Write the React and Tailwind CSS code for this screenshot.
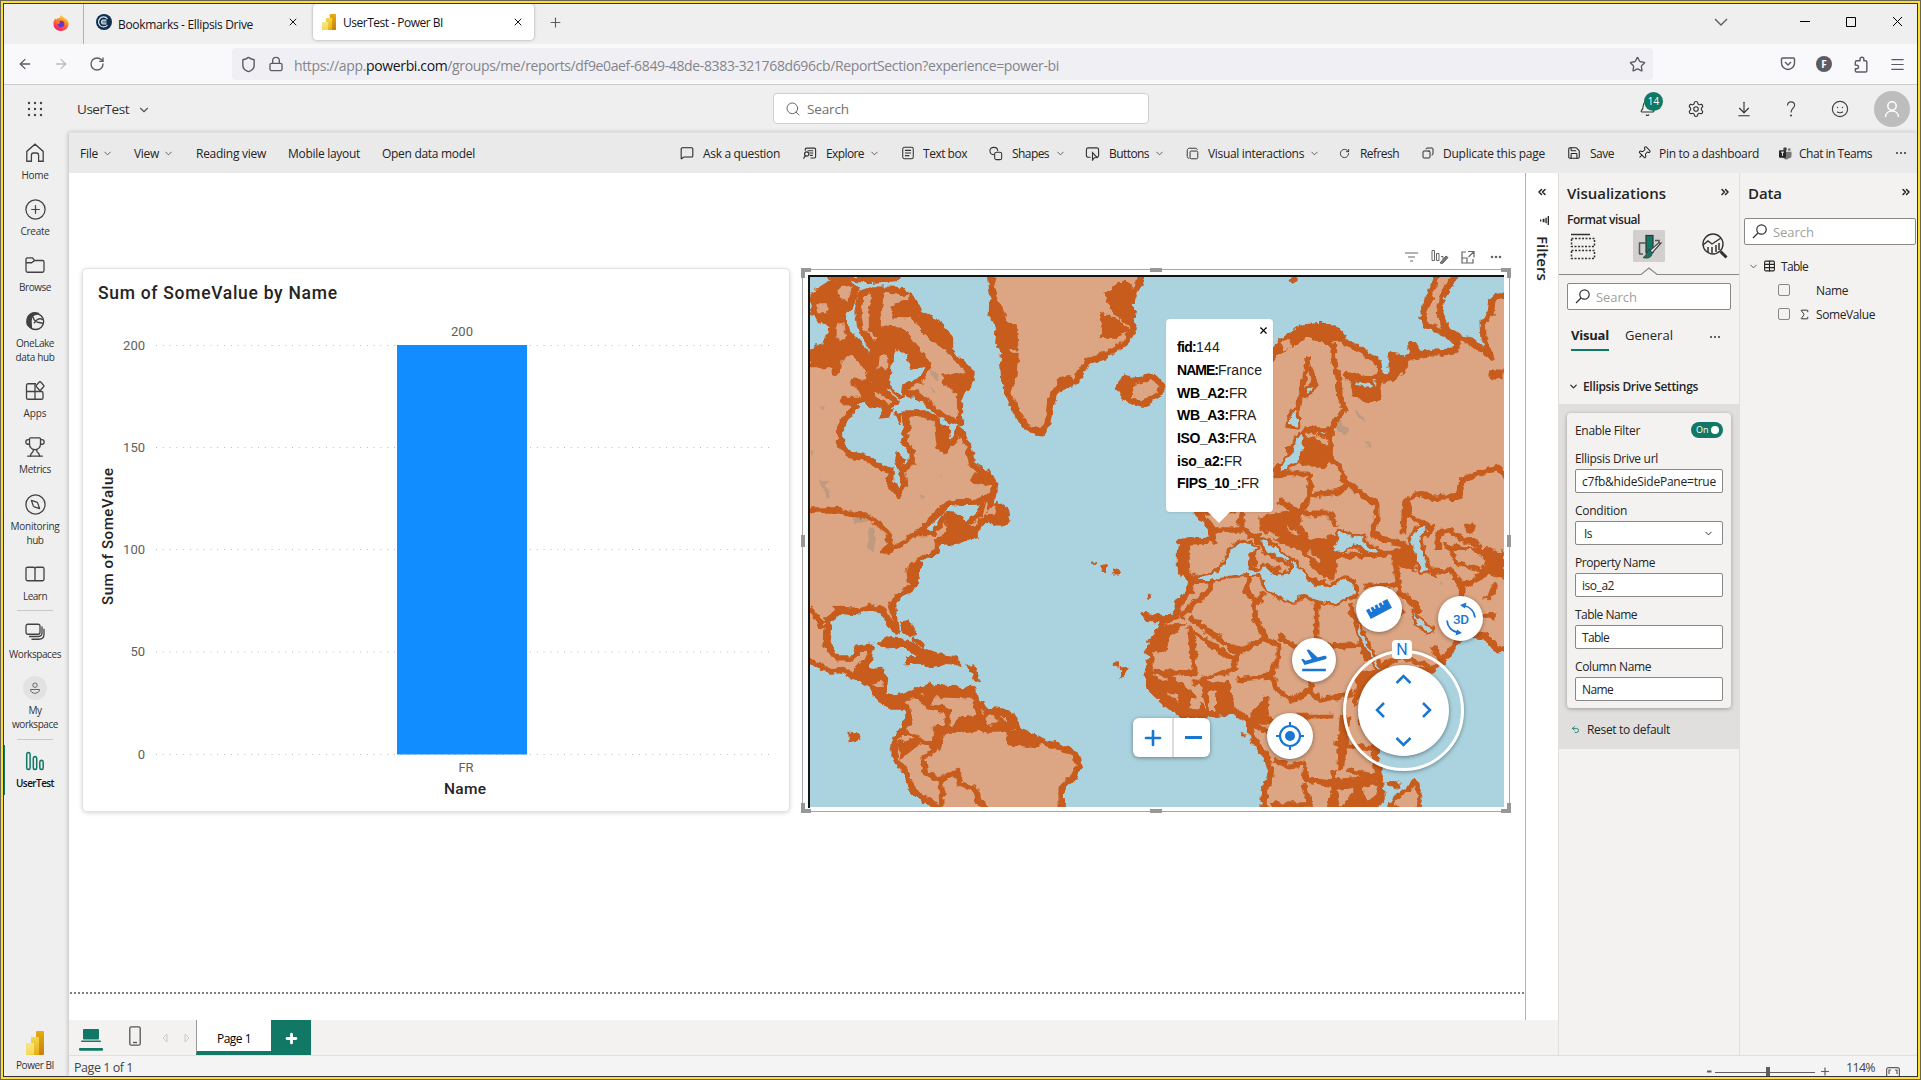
import React, { useLayoutEffect, useRef } from 'react';
import {
  ArrowLeft, ArrowRight, RotateCw, Shield, Lock, Star, Menu, X, Plus, ChevronDown, Bell, Settings,
  ArrowDownToLine, Search, MessageSquare, Trophy, CirclePlus, Compass, Save, Pin, Copy,
  ChevronsLeft, ChevronsRight, Undo2, Sigma, Table as TableIcon,
} from 'lucide-react';

/* Single-line label whose tracking is adjusted so that it fills the given width. */
function T({ w, className = '', children }) {
  const ref = useRef(null);
  useLayoutEffect(() => {
    const el = ref.current;
    el.style.letterSpacing = '0px';
    const natural = el.getBoundingClientRect().width;
    el.style.letterSpacing = `${(w - natural) / el.textContent.length}px`;
  }, [w]);
  return <span ref={ref} className={`inline-block shrink-0 translate-y-px whitespace-pre ${className}`}>{children}</span>;
}

const Chev = ({ className = 'h-[11px] w-[11px]' }) => (
  <ChevronDown className={`shrink-0 text-[#555] ${className}`} strokeWidth={2} />
);

function PowerBiLogo({ className }) {
  return (
    <svg viewBox="0 0 18 24" className={className} preserveAspectRatio="none">
      <defs>
        <linearGradient id="pb1" x1="0" y1="0" x2="0" y2="1"><stop stopColor="#e6ad10" /><stop offset="1" stopColor="#c87e0e" /></linearGradient>
        <linearGradient id="pb2" x1="0" y1="0" x2="0" y2="1"><stop stopColor="#f6d751" /><stop offset="1" stopColor="#e6ad10" /></linearGradient>
        <linearGradient id="pb3" x1="0" y1="0" x2="0" y2="1"><stop stopColor="#f9e589" /><stop offset="1" stopColor="#f6d751" /></linearGradient>
      </defs>
      <rect x="10" y="0" width="8" height="24" rx=".8" fill="url(#pb1)" />
      <rect x="5" y="6" width="8" height="18" rx=".8" fill="url(#pb2)" />
      <rect x="0" y="12" width="8" height="12" rx=".8" fill="url(#pb3)" />
    </svg>
  );
}

function TabStrip() {
  return (
    <div className="flex h-10 shrink-0 items-center bg-[#efefef] text-[12px] text-[#15141a]">
      <svg viewBox="0 0 16 16" className="ml-[49px] h-4 w-4 shrink-0 -translate-y-px">
        <defs>
          <linearGradient id="ff" x1=".8" y1="0" x2=".3" y2="1"><stop stopColor="#fff04a" /><stop offset=".4" stopColor="#ff8a1e" /><stop offset="1" stopColor="#f5156c" /></linearGradient>
        </defs>
        <path d="M8.400 0c1 1.500 1.600 2 3 3 2.500 1.200 4.200 3 4.200 6A7.600 7 0 0 1 .4 9c0-2.500.8-4 2-5.500l.9 1.200C4 3.500 5 3.200 6 3.400 7 2 7.500 1 8.400 0z" fill="url(#ff)" />
        <circle cx="8" cy="9" r="3.300" fill="#6b35c9" />
        <path d="M3 6c2-1 3.500 0 4.500 1.200-1.500 0-1.500 1-1 1.800C4.500 9.500 3.500 8 3 6z" fill="#ff7b22" />
      </svg>
      <div className="ml-[14px] h-10 w-px bg-[#b3b3b3]" />
      <svg viewBox="0 0 16 16" className="ml-3 h-4 w-4 shrink-0 -translate-y-[2px]">
        <circle cx="8" cy="8" r="8" fill="#0f3050" />
        <path d="M11.500 4.800A5 5 0 1 0 11.500 11M5.500 8h5M10.500 6.200H6.800c-1.600 0-1.600 3.600 0 3.600h3.700" fill="none" stroke="#dfe8f0" strokeWidth="1.200" />
      </svg>
      <T w={135} className="ml-[6px] -translate-y-[1px]">Bookmarks - Ellipsis Drive</T>
      <X className="ml-[34px] h-3 w-3 -translate-y-[2px]" strokeWidth={2} />
      <div className="ml-[14px] flex h-9 w-[221px] -translate-y-[2px] items-center rounded bg-white shadow-[0_0_3px_rgba(0,0,0,.35)]">
        <PowerBiLogo className="ml-[9px] h-4 w-[14px]" />
        <T w={100} className="ml-[7px]">UserTest - Power BI</T>
        <X className="ml-[69px] h-3 w-3" strokeWidth={2} />
      </div>
      <Plus className="ml-[14px] h-[15px] w-[15px] -translate-y-[2px] text-[#5b5b66]" strokeWidth={1.800} />
      <svg viewBox="0 0 200 20" className="ml-auto mr-[15px] h-5 w-[200px] -translate-y-[2px]" fill="none" stroke="#000" strokeWidth="1">
        <path d="M13 7l6 6 6-6" stroke="#5b5b66" strokeWidth="1.400" />
        <path d="M98 9.500h10M144.500 5.500h9v9h-9zM191 5l9 9M200 5l-9 9" />
      </svg>
    </div>
  );
}

function UrlBar() {
  return (
    <div className="flex h-[41px] shrink-0 items-center border-b border-[#cccccf] bg-[#f9f9fb] text-[#5b5b66]">
      <ArrowLeft className="ml-[13px] h-4 w-4" strokeWidth={1.900} />
      <ArrowRight className="ml-5 h-4 w-4 text-[#bcbcc2]" strokeWidth={1.900} />
      <RotateCw className="ml-5 h-4 w-4" strokeWidth={2} />
      <div className="ml-[127px] flex h-8 w-[1421px] items-center rounded bg-[#f0f0f4]">
        <Shield className="ml-2 h-[17px] w-[17px]" strokeWidth={2} />
        <Lock className="ml-[11px] h-4 w-4" strokeWidth={2} />
        <T w={765} className="ml-[10px] text-[14px] text-[#84848c]">
          https://app.<span className="text-[#15141a]">powerbi.com</span>/groups/me/reports/df9e0aef-6849-48de-8383-321768d696cb/ReportSection?experience=power-bi
        </T>
        <Star className="ml-auto mr-[7px] h-[17px] w-[17px]" strokeWidth={1.900} />
      </div>
      <svg viewBox="0 0 16 16" className="ml-[127px] h-4 w-4" fill="none" stroke="#5b5b66" strokeWidth="1.400">
        <path d="M2.500 2h11c.6 0 1 .4 1 1v4a6.500 6.500 0 0 1-13 0V3c0-.6.4-1 1-1z" /><path d="M5 6l3 3 3-3" />
      </svg>
      <div className="ml-[20px] flex h-4 w-4 items-center justify-center rounded-full bg-[#5b5b66] text-[10px] font-bold text-white">F</div>
      <svg viewBox="0 0 16 18" className="ml-[21px] h-[17px] w-4" fill="none" stroke="#5b5b66" strokeWidth="1.500" strokeLinejoin="round">
        <path d="M2 8V6.500C2 5.700 2.500 5 3.500 5H7V3.200C7 .6 11 .6 11 3.200V5h1.800c.8 0 1.400.6 1.400 1.400V15.600c0 .8-.6 1.400-1.400 1.400H3.400C2.600 17 2 16.400 2 15.600V13.500h1.500c2.500 0 2.500-3.800 0-3.800H2z" />
      </svg>
      <Menu className="ml-[20px] h-[17px] w-[17px]" strokeWidth={1.700} />
    </div>
  );
}

function Header() {
  return (
    <div className="flex h-[47px] shrink-0 items-center bg-[#efefef] text-[#333]">
      <svg viewBox="0 0 16 16" className="ml-[23px] h-4 w-4" fill="#444">
        {[2, 8, 14].map((y) => [2, 8, 14].map((x) => <circle key={`${x}-${y}`} cx={x} cy={y} r="1.200" />))}
      </svg>
      <T w={52} className="ml-[34px] text-[13.500px]">UserTest</T>
      <Chev className="ml-[8px] h-[14px] w-[14px] translate-y-px" />
      <div className="ml-[622px] flex h-[31px] w-[376px] items-center rounded border border-[#cfcfcf] bg-white">
        <Search className="ml-[11px] h-[16px] w-[16px] text-[#666]" strokeWidth={1.500} />
        <T w={42} className="ml-[6px] text-[13.500px] text-[#707070]">Search</T>
      </div>
      <div className="relative ml-[490px]">
        <Bell className="h-[17px] w-[17px]" strokeWidth={1.500} />
        <span className="absolute -top-[8px] left-[5px] flex h-[19px] w-[19px] items-center justify-center rounded-full bg-[#117865] text-[10px] text-white">14</span>
      </div>
      <Settings className="ml-[31px] h-[18px] w-[18px]" strokeWidth={1.500} />
      <ArrowDownToLine className="ml-[30px] h-[18px] w-[18px]" strokeWidth={1.500} />
      <svg viewBox="0 0 12 18" className="ml-[32px] h-[18px] w-3" fill="none" stroke="#444" strokeWidth="1.200">
        <path d="M2.500 5.500C2.500 3 4 1.800 6 1.800S9.600 3.200 9.600 5.200C9.600 8 6 8.500 6 12.500" /><circle cx="6" cy="15.500" r=".5" fill="#444" />
      </svg>
      <svg viewBox="0 0 18 18" className="ml-[34px] h-[18px] w-[18px]" fill="none" stroke="#444" strokeWidth="1.200">
        <circle cx="9" cy="9" r="7.600" /><path d="M6 11.800c1.500 1 4.500 1 6 0" /><circle cx="6.500" cy="7.500" r=".7" fill="#444" stroke="none" /><circle cx="11.500" cy="7.500" r=".7" fill="#444" stroke="none" />
      </svg>
      <div className="ml-[25px] flex h-9 w-9 items-center justify-center rounded-full bg-[#bdbdbd]">
        <svg viewBox="0 0 18 20" className="h-5 w-[18px]" fill="none" stroke="#fff" strokeWidth="1.500"><circle cx="9" cy="7" r="4.200" /><path d="M2.500 18c0-8 13-8 13 0" /></svg>
      </div>
    </div>
  );
}

const ic = 'h-[14px] w-[14px] shrink-0';
function Glyph({ name, className = ic }) {
  const paths = {
    explore: <><path d="M3.500 5V3.500c0-.8.5-1.300 1.300-1.300h8.400c.8 0 1.300.5 1.300 1.300v8c0 .8-.5 1.300-1.300 1.300H9M6 5h6M8 7.500h4M8.500 10h3" /><circle cx="5" cy="8.500" r="2.300" /><path d="M1.500 13.500l2-3" /></>,
    textbox: <><rect x="2" y="1.500" width="12" height="13" rx="2" /><path d="M4.500 5h7M4.500 8h7M4.500 11h5" /></>,
    shapes: <><path d="M6 9.500C-.5 9-.5 1 5.500 1c3 0 4.500 2 4.500 4" /><rect x="6.500" y="6.500" width="8" height="8.500" rx="2" /></>,
    buttons: <><path d="M6 12H3.500C2.500 12 1.500 11.500 1.500 10V4c0-1.200.8-2 2-2h9c1.200 0 2 .8 2 2v6c0 1-.5 1.700-1.500 2" /><path d="M8 7v8l2-2.500 3-.2z" /></>,
    visual: <><path d="M4 14c-1.500 0-2.500-1-2.500-2.500v-7C1.500 2.500 3 1.500 4.500 1.500H11c1.500 0 2.500.7 3 2" /><rect x="5" y="5" width="9.500" height="9.500" rx="1.500" /></>,
  };
  return <svg viewBox="0 0 16 16" className={className} fill="none" stroke="#333" strokeWidth="1.200">{paths[name]}</svg>;
}

function CommandBar() {
  return (
    <div className="flex h-[41px] shrink-0 items-center border-t border-[#e0e0e0] bg-[#eaeaea] text-[12px] text-[#252423]">
      <T w={18} className="ml-[11px]">File</T><Chev className="ml-1 h-[11px] w-[11px]" />
      <T w={25} className="ml-[21px]">View</T><Chev className="ml-1 h-[11px] w-[11px]" />
      <T w={70} className="ml-[22px]">Reading view</T>
      <T w={72} className="ml-[22px]">Mobile layout</T>
      <T w={93} className="ml-[22px]">Open data model</T>
      <MessageSquare className={`${ic} ml-[205px]`} strokeWidth={1.800} />
      <T w={77} className="ml-[9px]">Ask a question</T>
      <Glyph name="explore" className="ml-[22px] h-[15px] w-[15px]" />
      <T w={38} className="ml-[9px]">Explore</T><Chev className="ml-[5px] h-[11px] w-[11px]" />
      <Glyph name="textbox" className="ml-[21px] h-[14px] w-[14px]" />
      <T w={44} className="ml-[8px]">Text box</T>
      <Glyph name="shapes" className="ml-[22px] h-[15px] w-[14px]" />
      <T w={37} className="ml-[9px]">Shapes</T><Chev className="ml-[6px] h-[11px] w-[11px]" />
      <Glyph name="buttons" className="ml-[19px] h-[15px] w-[15px]" />
      <T w={40} className="ml-[9px]">Buttons</T><Chev className="ml-[5px] h-[11px] w-[11px]" />
      <Glyph name="visual" className="ml-[21px] h-[13px] w-[13px]" />
      <T w={96} className="ml-[9px]">Visual interactions</T><Chev className="ml-[5px] h-[11px] w-[11px]" />
      <RotateCw className="ml-[19px] h-[11px] w-[11px]" strokeWidth={1.800} />
      <T w={39} className="ml-[10px]">Refresh</T>
      <Copy className="ml-[23px] h-3 w-3 -scale-x-100" strokeWidth={1.900} />
      <T w={102} className="ml-[9px]">Duplicate this page</T>
      <Save className="ml-[22px] h-[14px] w-[14px]" strokeWidth={1.800} />
      <T w={24} className="ml-[9px]">Save</T>
      <Pin className="ml-[23px] h-[14px] w-[14px] rotate-45" strokeWidth={1.700} />
      <T w={100} className="ml-[8px]">Pin to a dashboard</T>
      <svg viewBox="0 0 14 14" className="ml-5 h-[13px] w-[13px]">
        <circle cx="6.500" cy="2.200" r="2" fill="#444" /><circle cx="11" cy="2.800" r="1.500" fill="#777" />
        <path d="M5 5h8.500v4.500a2.500 2.500 0 0 1-3 2.500C9 14 5 14 4.500 11z" fill="#777" /><rect x="0" y="3.500" width="7.500" height="8" rx="1" fill="#252423" /><path d="M2 5.500h3.500M3.800 5.500v4" stroke="#fff" />
      </svg>
      <T w={73} className="ml-[7px]">Chat in Teams</T>
      <svg viewBox="0 0 12 4" className="ml-[23px] h-1 w-3" fill="#333"><circle cx="2" cy="2" r="1" /><circle cx="6" cy="2" r="1" /><circle cx="10" cy="2" r="1" /></svg>
    </div>
  );
}

function NavItem({ icon, lines, className = '', bold, widths }) {
  return (
    <div className={`relative flex w-full shrink-0 flex-col items-center pr-[3px] pt-[3px] ${className}`}>
      {bold && <div className="absolute -top-[3px] left-0 h-[50px] w-px bg-[#117865]" />}
      <div className="flex h-[20px] items-center">{icon}</div>
      <div className="mt-[4px] flex flex-col items-center">
        {lines.map((l, i) => <T key={l} w={widths[i]} className={`text-[10px] leading-[14px] ${bold ? 'font-semibold text-[#111]' : 'text-[#333]'}`}>{l}</T>)}
      </div>
    </div>
  );
}

const nav = 'h-[20px] w-[20px] text-[#424242]';
const Svg = ({ children }) => <svg viewBox="0 0 20 18" preserveAspectRatio="none" className={nav} fill="none" stroke="#424242" strokeWidth="1.300">{children}</svg>;

function Sidebar() {
  return (
    <div className="flex w-[65px] shrink-0 flex-col items-center bg-[#efefef] pt-[8px]">
      <NavItem className="h-[56px]" lines={['Home']} widths={[27]} icon={<Svg><path d="M1.800 15.500V7.600L10 1l8.200 6.600v8.900h-4.600V11c0-1.200-.8-2-2-2H8.400c-1.200 0-2 .8-2 2v5.500H1.800z" /></Svg>} />
      <NavItem className="h-[56px]" lines={['Create']} widths={[29]} icon={<CirclePlus className="h-[23px] w-[23px] text-[#424242]" strokeWidth={1.300} />} />
      <NavItem className="h-[56px]" lines={['Browse']} widths={[32]} icon={<Svg><path d="M1 4V14c0 .8.6 1.500 1.500 1.500h15c.8 0 1.500-.6 1.500-1.500V6.300c0-.8-.6-1.300-1.500-1.300H9.500L7.500 2.600H2.500C1.600 2.600 1 3.200 1 4zM1 7h5.500L9.500 5" /></Svg>} />
      <NavItem className="h-[70px]" lines={['OneLake', 'data hub']} widths={[38, 39]} icon={<Svg><ellipse cx="10.500" cy="9.500" rx="8.200" ry="7.200" /><path d="M2 11C1 3 8 0 14 2.500 9 3 6.500 4 6 9L6.500 15C4 14 2 13 2 11z" fill="#424242" /><path d="M8 5c1 5 4 5 10 6M9 11c3-4 6-5 9-3" /></Svg>} />
      <NavItem className="h-[56px]" lines={['Apps']} widths={[23]} icon={<Svg><path d="M11 2.500H3C2.200 2.500 1.500 3 1.500 4v11c0 .9.700 1.500 1.500 1.500h13.500c.8 0 1.500-.6 1.500-1.500v-4c0-.9-.7-1.500-1.500-1.500h-15M10 2.500v14" /><rect x="12" y="1.500" width="6" height="6" rx="1" transform="rotate(45 15 4.500)" /></Svg>} />
      <NavItem className="h-[57px]" lines={['Metrics']} widths={[32]} icon={<Trophy className="h-[22px] w-[22px] text-[#424242]" strokeWidth={1.400} />} />
      <NavItem className="h-[70px]" lines={['Monitoring', 'hub']} widths={[49, 17]} icon={<Compass className="h-[23px] w-[23px] -scale-x-100 text-[#424242]" strokeWidth={1.300} />} />
      <NavItem className="h-[49px]" lines={['Learn']} widths={[24]} icon={<Svg><path d="M10 4c0-.8-.6-1-1.500-1h-6C1.600 3 1 3.400 1 4.200v9.600c0 .8.6 1.200 1.500 1.200h15c.9 0 1.500-.4 1.500-1.200V4.200C19 3.400 18.400 3 17.500 3h-6c-.9 0-1.500.2-1.500 1v11" /></Svg>} />
      <div className="mr-[3px] h-px w-9 shrink-0 bg-[#c8c8c8]" />
      <NavItem className="mt-[8px] h-[56px]" lines={['Workspaces']} widths={[52]} icon={<Svg><rect x="1" y="2" width="14" height="9" rx="1.800" /><path d="M4 13h9.500c2 0 3.500-1 3.500-3V4M6.500 15.500h7.500c3 0 5-1.500 5-4.500V6" /></Svg>} />
      <NavItem className="h-[64px]" lines={['My', 'workspace']} widths={[13, 46]} icon={<div className="flex h-6 w-6 shrink-0 items-center justify-center rounded-full bg-[#e2e2e2]"><svg viewBox="0 0 12 12" className="h-3 w-3" fill="none" stroke="#666"><circle cx="6" cy="3.200" r="2.200" /><path d="M1.500 7.500h9c0 5-9 5-9 0z" /></svg></div>} />
      <div className="mr-[3px] h-px w-9 shrink-0 bg-[#c8c8c8]" />
      <NavItem bold className="mt-[8px] h-[56px]" lines={['UserTest']} widths={[38]} icon={<svg viewBox="0 0 20 18" preserveAspectRatio="none" className={nav} fill="none" stroke="#117865" strokeWidth="1.500"><rect x="1.700" y="1.500" width="3.400" height="15" rx="1.500" /><rect x="8.300" y="5" width="3.400" height="11.500" rx="1.500" /><rect x="14.800" y="8.500" width="3.400" height="8" rx="1.500" /></svg>} />
      <div className="mt-auto flex flex-col items-center pb-[6px] pr-[3px]">
        <PowerBiLogo className="h-6 w-[18px]" />
        <T w={38} className="mt-[3px] text-[10px] leading-[12px] text-[#333]">Power BI</T>
      </div>
    </div>
  );
}

function BarChart() {
  const ticks = [[200, 76], [150, 178], [100, 280], [50, 382.500], [0, 485]];
  return (
    <div className="absolute left-[13px] top-[95px] h-[544px] w-[708px] rounded-[5px] border border-[#e3e3e3] bg-white shadow-[0_1px_4px_rgba(0,0,0,.16)]">
      <svg viewBox="-1 -1 706 542" className="h-[542px] w-[706px] font-['Roboto',sans-serif]">
        <text x="14" y="29" fontSize="17.500" fontWeight="500" fill="#252423" textLength="239" lengthAdjust="spacing">Sum of SomeValue by Name</text>
        {ticks.map(([v, y]) => (
          <g key={v}>
            <line x1="72" x2="690" y1={y - 0.500} y2={y - 0.500} stroke="#bdbdbd" strokeDasharray="1 5.800" />
            <text x="61" y={y + 3.500} textAnchor="end" fontSize="13" fill="#605e5c">{v}</text>
          </g>
        ))}
        <rect x="313" y="75" width="130" height="409.500" fill="#118dff" />
        <text x="378" y="65.500" textAnchor="middle" fontSize="13" fill="#605e5c">200</text>
        <text x="382" y="502" textAnchor="middle" fontSize="13" fill="#605e5c">FR</text>
        <text x="381" y="524" textAnchor="middle" fontSize="15.500" fontWeight="500" fill="#252423" textLength="42">Name</text>
        <text transform="translate(29 335) rotate(-90)" fontSize="15" fontWeight="500" fill="#252423" textLength="137">Sum of SomeValue</text>
      </svg>
    </div>
  );
}

const AMERICAS = 'M10,345 L95,345 115,322 150,300 190,320 215,360 200,400 160,395 200,420 190,450 130,450 165,470 120,530 120,580 150,615 190,620 240,650 272,662 270,700 297,735 312,700 305,660 335,640 335,600 312,575 322,530 315,490 370,490 410,510 420,590 435,600 465,570 480,540 505,590 515,640 555,670 583,700 578,740 530,755 450,757 405,800 360,845 400,850 440,795 480,800 490,835 540,790 552,745 575,740 570,775 608,770 620,820 560,800 530,835 470,875 412,880 410,905 360,930 330,955 345,1005 300,1035 275,1065 285,1100 290,1145 265,1115 250,1080 210,1070 170,1085 120,1080 85,1110 80,1180 110,1225 160,1225 175,1195 215,1190 200,1245 190,1265 245,1260 255,1290 250,1330 280,1345 320,1340 350,1325 390,1310 400,1330 440,1325 520,1320 525,1350 560,1382 630,1390 655,1440 700,1460 740,1480 780,1490 830,1515 837,1545 820,1580 785,1615 785,1700 430,1700 410,1671 340,1625 320,1570 280,1515 285,1470 325,1415 325,1370 270,1370 225,1330 210,1300 150,1275 125,1260 95,1265 10,1225Z';
const BAFFIN = 'M175,180 L185,130 220,118 290,120 330,140 360,190 420,225 450,265 450,305 515,370 505,405 480,440 480,520 430,500 395,470 350,430 320,430 315,412 360,390 385,350 350,300 310,250 250,262 215,290 180,230Z';
const GREENLAND = 'M572,60 L580,160 578,200 602,230 595,280 622,310 612,380 628,440 655,500 680,530 725,550 743,515 750,465 770,415 830,392 860,335 920,315 980,275 998,240 990,150 1015,105 1030,60Z';
const ICELAND = 'M962,405 L978,382 1005,395 1060,378 1090,408 1070,438 1030,462 990,450 975,420Z';
const EURAFRICA = 'M1190,790 L1235,830 1240,872 1150,875 1140,895 1140,960 1175,985 1170,1020 1135,1060 1130,1095 1090,1115 1065,1160 1045,1195 1055,1225 1040,1275 1050,1310 1090,1355 1145,1395 1220,1395 1305,1385 1345,1410 1360,1470 1400,1520 1415,1570 1392,1620 1390,1700 1705,1700 1745,1640 1738,1580 1725,1530 1725,1470 1780,1390 1840,1310 1830,1270 1900,1258 1930,1230 1970,1180 1985,1150 2060,1160 2090,1200 2130,1190 2130,140 2100,135 2078,150 2072,190 2048,215 2050,260 2072,320 2020,277 1970,260 1940,240 1920,195 1925,145 1975,60 1915,60 1885,150 1868,195 1880,225 1940,250 1975,285 1960,305 1900,308 1820,328 1805,358 1775,318 1775,375 1735,400 1735,440 1690,445 1640,372 1700,388 1742,378 1738,340 1690,305 1640,280 1620,248 1570,228 1520,235 1475,262 1440,285 1410,330 1370,450 1400,650 1300,780Z';
const SEAS = [
  'M1525,415 L1540,410 1530,430 1515,435Z',
  'M1490,480 L1492,530 1465,525 1472,500Z',
  'M1490,562 L1512,555 1505,600 1490,635 1440,665 1460,625 1480,605Z',
  'M1668,395 L1715,403 1715,412 1672,405Z',
  'M1560,550 L1580,548 1575,555Z',
  'M1600,905 L1620,845 1640,855 1660,862 1690,855 1690,878 1735,905 1725,915 1660,880 1630,900Z',
  'M1832,860 L1855,835 1875,830 1880,840 1858,860 1862,890 1885,960 1865,965 1848,930 1838,890Z',
  'M1185,990 L1260,960 1285,925 1290,895 1330,875 1370,895 1350,910 1345,960 1380,965 1392,945 1425,975 1470,970 1480,935 1505,965 1545,1010 1590,1010 1640,985 1665,1010 1665,1035 1600,1060 1550,1050 1510,1030 1480,1055 1400,1020 1382,970 1300,975 1230,990Z',
  'M1380,870 L1410,880 1470,930 1460,935 1400,905Z',
  'M1672,1120 L1685,1150 1700,1180 1725,1230 1745,1258 1735,1258 1705,1205 1680,1160Z',
  'M1840,1085 L1865,1120 1900,1140 1880,1145 1850,1115Z',
  'M275,345 L290,300 320,310 330,360 375,350 355,385 310,400 305,440 270,410Z',
];
const SPOTS = [
  'M30,130 L85,95 140,92 178,112 165,165 135,190 145,240 200,295 225,350 200,365 155,310 120,330 118,375 95,372 90,345 30,350 30,300 70,270 85,225 55,220 30,175Z',
  'M80,80H300V92L200,98 150,92 85,92Z',
  'M205,120 L250,120 240,230 310,235 340,280 390,350 370,365 330,360 325,315 290,300 260,420 300,455 260,475 200,465 165,400 215,400 210,300 240,260 205,245Z',
  'M270,170 L340,140 355,200 420,220 455,300 430,300 380,255 330,200 275,200Z',
  'M425,375 L520,370 510,410 480,450 460,420 430,400Z', 'M245,475 L280,475 270,500 240,505Z', 'M285,490 L308,490 300,525Z',
  'M410,530 L445,530 450,590 425,605Z', 'M290,610 L318,630 300,655 285,645Z', 'M515,680 L570,660 590,700 560,705 520,700Z',
  'M440,790 L490,800 500,830 545,830 530,860 460,880 405,870 440,850Z', 'M590,760 L620,775 625,825 590,825 550,815 550,800Z',
  'M575,110 L610,190 650,240 655,300 590,295 590,235 575,200Z', 'M600,310 L655,310 645,400 625,440 605,390Z',
  'M915,130 L980,85 1000,120 1000,240 980,220 930,180Z', 'M900,190 L960,210 990,240 940,265 900,265 910,230Z', 'M950,410 L975,375 1005,390 990,455 965,440Z',
  'M770,390 L800,375 830,390 800,410 770,415Z', 'M320,955 L365,930 350,1010 325,1000Z', 'M100,1072 L190,1075 180,1095 110,1090Z',
  'M1415,320 L1440,270 1500,225 1570,220 1625,245 1625,270 1560,275 1520,260 1480,290 1440,310Z', 'M1655,400 L1740,415 1740,440 1695,458 1660,440Z',
  'M1770,310 L1810,315 1815,365 1780,390 1760,375 1775,350Z', 'M1815,312 L1890,300 1900,320 1820,330Z', 'M1822,295a18,18 0 1,1 36,0a18,18 0 1,1 -36,0Z', 'M1465,85l15,-5 12,12 -15,8Z',
  'M1500,570 L1545,560 1590,600 1600,640 1550,650 1500,640Z', 'M1420,650 L1450,640 1450,680 1420,680Z', 'M1455,595l20,-10 10,25 -15,20Z',
  'M1380,800 L1500,780 1500,830 1550,870 1600,860 1595,900 1610,945 1600,990 1560,975 1500,900 1440,880 1380,840Z',
  'M1135,870 L1165,870 1170,980 1145,980 1135,930Z', 'M1345,885h22v65h-22Z', 'M1395,945 L1440,955 1430,985 1400,970Z', 'M1265,935l40,-15 -5,25Z',
  'M1525,985l45,5 0,15 -45,-5Z', 'M1630,990l35,-5 -5,25 -30,-5Z', 'M1580,860 L1640,850 1640,890 1590,900Z', 'M1780,900 L1840,890 1845,960 1800,950Z',
  'M1930,880 L1990,890 2110,900 2110,985 2040,970 1970,940Z', 'M1995,833a15,15 0 1,1 30,0a15,15 0 1,1 -30,0Z', 'M2070,360l42,0v30l-42,-5Z',
  'M232,1180 L260,1160 320,1170 370,1195 430,1215 475,1220 480,1245 430,1240 400,1250 350,1240 315,1245 320,1220 360,1220 310,1190 245,1195Z',
  'M305,1115 L330,1110 350,1150 330,1160 305,1140Z', 'M340,1160l40,25-10,5-30,-15Z', 'M150,1445l20,0 15,22 -35,8Z', 'M500,1245l25,0 5,30 15,20 -20,-5Z',
  'M940,1240l15,-5 0,20 -15,-5Z', 'M960,1250l25,0 -20,35Z', 'M945,955l15,10-5,10-18,0Z', 'M905,950l18,-5 -10,20Z', 'M875,940l10,-2 0,5 -10,0Z', 'M1045,1030l5,0 2,15 -7,5Z', 'M1022,1090l60,5 50,5 -40,15 -50,0Z',
  'M150,1275 L190,1230 210,1265 255,1265 250,1335 320,1345 300,1375 265,1375 220,1330 210,1305Z', 'M360,1310 L440,1305 520,1320 530,1345 400,1340 390,1370Z',
  'M620,1440 L720,1460 720,1490 625,1485Z', 'M400,1425 L460,1430 480,1400 540,1400 550,1440 480,1450 430,1450 420,1500 400,1500Z', 'M540,1390l90,0 25,45 -100,5Z',
  'M290,1480l60,-15 10,15 -55,45Z', 'M1075,1130 L1160,1120 1110,1160 1100,1205 1050,1205Z', 'M1045,1260 L1100,1265 1180,1330 1230,1395 1145,1400 1080,1355 1045,1315Z',
  'M1200,1300l85,-10 20,95 -80,10Z', 'M1350,1390 L1400,1340 1410,1400 1420,1420 1350,1420Z', 'M1670,1270 L1740,1260 1760,1330 1690,1330 1660,1370Z', 'M1620,1400 L1650,1400 1630,1560 1610,1560Z',
  'M1600,1590 L1690,1580 1745,1600 1745,1640 1700,1690 1580,1680Z', 'M1760,1595l35,0 5,20 -30,-5Z', 'M1320,1450l20,5 -10,8Z',
];
const INNER = [
  'M115,115l40,-5 -10,45 -25,-10Z', 'M50,160l30,0 5,30 -25,0Z', 'M110,220l20,0 10,50 -30,-5Z', 'M190,140l20,-10 -5,70 -20,0Z', 'M250,140l25,-10 0,60 -25,20Z', 'M240,310l25,10 0,40 -30,-5Z', 'M300,135l25,0 0,15 -20,0Z', 'M225,420l50,35-10,5-35,-20Z',
  'M1440,280l30,-10 5,25 -20,5Z', 'M1515,815l50,-5 15,45 -50,15 -20,-30Z', 'M1515,650l40,0 -25,20Z', 'M1460,830l40,20 -20,5Z', 'M1550,675 L1600,655 1615,715 1560,715Z', 'M1400,840l40,20 -10,8 -35,-15Z', 'M1525,900l40,35 -10,5 -30,-25Z',
  'M130,1245l40,0 0,10Z', 'M555,1402l30,-10 5,25 -30,5Z', 'M600,1398l15,0 0,20Z', 'M1060,1270l30,5 15,20 -35,-5Z', 'M1170,1345l30,-5 0,35 -35,0Z', 'M1225,1330l20,-10 0,60 -15,0Z', 'M1100,1330l30,0 10,30Z', 'M300,1455l30,0 10,10 -30,10Z',
  'M1610,1620l50,-10 0,20 -40,40Z', 'M1690,1610l40,-5 -10,40 -20,10Z', 'M1960,900l50,0 50,30 -15,25 -70,-20Z', 'M2030,880l60,0 20,30Z', 'M215,1305l30,-10 0,20Z', 'M570,770l20,0-10,25-20,0Z', 'M1180,890l60,0 -10,60 -50,30Z', 'M1220,1290l40,-15 20,15 -50,10Z',
];
const BORDERS = 'M10,780 H105 L150,793 195,795 235,820 265,850 270,890 250,905 300,885 345,850 400,850 M30,1075 L50,1100 70,1135 M350,1325 L385,1370 445,1380 440,1430 M300,1440 L350,1465 380,1480 425,1485 M385,1480 L410,1500 370,1520 375,1565 420,1590 475,1565 475,1600 530,1620 535,1650 570,1690 M425,1590 V1690 M525,1350 L540,1400 550,1440 590,1440 655,1430 M300,1480 L340,1470 M480,1440 L520,1400'
  + ' M1520,325 L1535,370 1545,410 M1525,320 L1500,440 1490,480 M1600,285 L1600,330 1615,380 1620,440 1635,480 1590,540 1510,540 M1560,260 L1600,290 M1590,545 L1590,620 1620,650 1635,690 1670,720 1730,765 1730,810 1715,850 M1440,670 L1530,670 1530,740 1500,790 1430,750 M1535,735 L1620,725 1650,700 M1510,790 L1590,790 1610,830 M1535,620 L1580,650 M1500,580 L1580,600 M1810,850 L1815,755 1850,730 1900,745 1980,740 1985,690 2050,665 2095,655 2130,690 M1820,760 L1830,800 1870,820 1900,830 1880,860 M1915,900 V850 L1950,840 1990,870 2030,880 2050,910 M1710,850 L1790,880 1850,900 M1235,840 L1330,840 1380,860 M1330,780 L1320,830 1380,880'
  + ' M1175,980 L1240,1000 M1230,990 L1230,1020 1140,1100 M1165,1100 L1310,1205 1400,1165 1365,1110 1365,1060 1340,1020 1350,970 M1170,1130 L1185,1270 1060,1265 M1180,1145 L1300,1230 1300,1260 1180,1300 M1310,1210 L1300,1240 1310,1260 M1400,1165 L1435,1185 1435,1220 1410,1280 1310,1290 M1435,1160 L1490,1190 1700,1185 M1550,1050 V1190 M1650,1060 L1690,1185 1700,1230 M1370,1060 L1390,1030 M1420,1280 L1430,1320 1480,1350 1520,1325 1540,1300 M1520,1320 L1560,1350 1660,1330 M1400,1340 L1380,1390 1420,1420 1480,1400 1600,1400 M1350,1420 L1420,1450 M1420,1530 L1470,1550 1510,1540 1520,1590 1600,1600 1600,1560 M1410,1665 H1530 L1510,1600 M1600,1480 L1740,1500 M1640,1560 L1740,1585 M1680,1410 L1740,1490 M1690,1010 L1800,1005 M1590,920 L1780,910 1790,960 1800,1030 1840,1060 1860,1085 M1700,1090 L1760,1060 1810,1090 M1740,1080 L1760,1010 M1745,1250 L1800,1220 1890,1250 M1920,1230 L1900,1190 M1890,960 L1960,965 1985,1010 1985,1090 2090,1100 M1985,1010 L2060,970 2112,960 M2090,1000 L2060,1050 M1850,950 L1910,975 M1800,1670 L1800,1650 1850,1600 1855,1670';
const LAKES = 'M55,690l30,0 -5,10 10,45 -10,5 -15,-45Z M205,840l20,-10 0,40 -5,35 -15,0Z M150,800l60,5 20,10 -30,0 -40,5Z M240,840l40,15-20,8Z M1620,510l30,30 -15,15 -25,-10Z M1665,480l15,10 10,30 -15,-10Z M395,360l20,15 -10,20Z M1700,570l12,20-15,0Z M390,410l15,10-5,10Z M1920,995l12,5-5,10Z M360,740l15,-5 0,15Z M415,670l15,5-5,5Z M60,465l15,5-10,8Z M35,600l8,5-5,20Z';

function WorldMap() {
  const blue = '#aad3df';
  const land = '#dca583';
  const rim = '#c75b1b';
  return (
    <svg viewBox="30 81 2082 1590" className="block h-[530px] w-[694px]">
      <defs>
        <filter id="rough" filterUnits="userSpaceOnUse" x="0" y="40" width="2140" height="1660">
          <feTurbulence type="fractalNoise" baseFrequency="0.05" numOctaves="2" seed="4" />
          <feDisplacementMap in="SourceGraphic" scale="22" xChannelSelector="R" yChannelSelector="G" />
        </filter>
      </defs>
      <rect x="0" y="0" width="2200" height="1700" fill={blue} />
      <g filter="url(#rough)" strokeLinejoin="round">
        <g fill={land} stroke={rim} strokeWidth="19">
          {[AMERICAS, BAFFIN, GREENLAND, ICELAND, EURAFRICA].map((d) => <path key={d} d={d} />)}
        </g>
        <path d={LAKES} fill="#bd9a80" />
        <path d={BORDERS} fill="none" stroke={rim} strokeWidth="17" />
        <g fill={rim} stroke={rim} strokeWidth="3">{SPOTS.map((d) => <path key={d} d={d} />)}</g>
        <g fill={land}>{INNER.map((d) => <path key={d} d={d} />)}</g>
        <g fill={blue} stroke={rim} strokeWidth="18" paintOrder="stroke">{SEAS.map((d) => <path key={d} d={d} />)}</g>
        <path d="M1770,1671 L1790,1640 1830,1615 1845,1595 1860,1640 1850,1700Z" fill={land} stroke={rim} strokeWidth="16" />
        <path d="M30,210l60,20 -20,50 -20,10 -10,-40Z" fill={blue} />
      </g>
    </svg>
  );
}

const popup = [['fid:', '144', 19, 24], ['NAME:', 'France', 41, 44], ['WB_A2:', 'FR', 52, 18], ['WB_A3:', 'FRA', 52, 27], ['ISO_A3:', 'FRA', 52, 27], ['iso_a2:', 'FR', 47, 18], ['FIPS_10_:', 'FR', 64, 18]];
const round = 'absolute flex items-center justify-center rounded-full bg-white shadow-[0_1px_4px_rgba(0,0,0,.4)]';

function MapVisual() {
  return (
    <div className="absolute left-[733px] top-[96px] h-[543px] w-[708px] border border-[#a6a6a6]">
      <div className="absolute left-[5px] top-[5px] h-[533px] w-[696px] overflow-hidden border-l-2 border-t-2 border-[#141414]">
        <WorldMap />
        <div className="absolute left-[356px] top-[42px] h-[193px] w-[107px] rounded bg-white pl-[11px] pt-[16px] font-['Liberation_Sans',sans-serif] text-[14px] text-black shadow-[0_1px_2px_rgba(0,0,0,.1)]">
          <X className="absolute right-1 top-[6px] h-[11px] w-[11px]" strokeWidth={2.500} />
          {popup.map(([k, v, a, b]) => (
            <div key={k} className="flex h-[22.700px] items-center leading-none">
              <T w={a} className="font-bold">{k}</T><T w={b} className="text-[#222]">{v}</T>
            </div>
          ))}
          <svg viewBox="0 0 24 12" className="absolute left-[41px] top-[192px] h-3 w-6" fill="#fff"><path d="M0 0h24L12 12z" /></svg>
        </div>
        <div className={`${round} left-[546px] top-[309px] h-[46px] w-[46px]`}>
          <svg viewBox="0 0 26 22" className="h-[22px] w-[26px]" fill="#1976d2">
            <g transform="rotate(-28 13 11)"><path d="M1 6h3.500v4h1.500v-4h3v3h1.500v-3h3v4h1.500v-4h3v3h1.500v-3H25v10H1z" /></g>
          </svg>
        </div>
        <div className={`${round} left-[628px] top-[319px] h-[45px] w-[45px]`}>
          <svg viewBox="0 0 34 34" className="h-[34px] w-[34px]" fill="none" stroke="#1976d2" strokeWidth="1.800">
            <path d="M20 3.500c6 1.500 10.500 6 11 12M3 18.500C3.500 25 8 29.500 14 30.500" />
            <path d="M16 3l6.500-2.500-1.500 6zM18 31l-6.500 2.500 1.500-6z" fill="#1976d2" strokeWidth="0" />
            <text x="9" y="22" fontSize="13.500" fontWeight="500" fill="#1976d2" stroke="none" textLength="16" className="font-['Roboto',sans-serif]">3D</text>
          </svg>
        </div>
        <div className={`${round} left-[482px] top-[361px] h-[44px] w-[44px]`}>
          <svg viewBox="0 0 24 24" className="h-[30px] w-[30px]" fill="#1976d2"><path d="M2.500 19h19v2h-19zM22.070 9.640c-.21-.8-1.040-1.280-1.840-1.060L14.920 10l-6.900-6.430-1.930.51 4.140 7.170-4.970 1.330-1.970-1.540-1.450.39 2.590 4.490 16.570-4.430c.81-.23 1.280-1.050 1.070-1.850z" /></svg>
        </div>
        <div className={`${round} left-[457px] top-[436px] h-[46px] w-[46px]`}>
          <svg viewBox="0 0 28 28" className="h-7 w-7" fill="none" stroke="#1976d2" strokeWidth="2.200"><circle cx="14" cy="14" r="10" /><circle cx="14" cy="14" r="5" fill="#1976d2" stroke="none" /><path d="M14 0v5M14 23v5M0 14h5M23 14h5" /></svg>
        </div>
        <div className="absolute left-[323px] top-[441px] flex h-[39px] w-[77px] items-center rounded-md bg-white shadow-[0_1px_4px_rgba(0,0,0,.4)]">
          <Plus className="ml-[8px] h-[24px] w-[24px] text-[#1976d2]" strokeWidth={2.600} />
          <div className="ml-[7px] h-full w-[2px] bg-[#dcdcdc]" />
          <svg viewBox="0 0 17 3" className="ml-[11px] h-[3px] w-[17px]"><rect width="17" height="3" fill="#1976d2" /></svg>
        </div>
        <div className="absolute left-[533px] top-[373px] flex h-[121px] w-[121px] items-center justify-center rounded-full border-[3px] border-white shadow-[0_1px_4px_rgba(0,0,0,.4)]">
          <div className="h-[91px] w-[91px] rounded-full bg-white shadow-[0_1px_4px_rgba(0,0,0,.45)]">
            <svg viewBox="0 0 91 91" className="h-[91px] w-[91px]" fill="none" stroke="#1976d2" strokeWidth="2.500"><path d="M38.500 18l7-7 7 7M38.500 73l7 7 7-7M26 38l-7 7 7 7M65 38l7 7-7 7" /></svg>
          </div>
        </div>
        <div className="absolute left-[582px] top-[363px] flex h-[19px] w-5 items-center justify-center rounded bg-white font-['Roboto',sans-serif] text-[16px] text-[#1976d2]">N</div>
      </div>
      <svg viewBox="0 0 710 545" className="absolute -left-[2px] -top-[2px] h-[545px] w-[710px]" fill="#979797">
        <path d="M0 0h10v4H4v6H0zM710 0h-10v4h6v6h4zM0 545h10v-4H4v-6H0zM710 545h-10v-4h6v-6h4zM349 0h12v4h-12zM349 541h12v4h-12zM0 267h4v12H0zM706 267h4v12h-4z" />
      </svg>
      <svg viewBox="0 0 100 16" className="absolute -top-[21px] right-[5px] h-4 w-[100px]" fill="none" stroke="#666" strokeWidth="1.200">
        <path d="M1 4h13M4 8h7M6 12h3" />
        <path d="M28 1.500h2.500v10H28zM32.500 4.500H35v7h-2.500zM37 7.500h2v3" strokeWidth="1" /><path d="M36 14l6-7 2 1.500-5.500 6z" fill="#777" strokeWidth="1" />
        <path d="M62 3h-4v11h11v-4M64 2.500h6v6M69.500 3l-5 5M58 9h5v5" />
        <g fill="#666" stroke="none"><circle cx="88" cy="8" r="1.300" /><circle cx="92" cy="8" r="1.300" /><circle cx="96" cy="8" r="1.300" /></g>
      </svg>
    </div>
  );
}

function Canvas() {
  return (
    <div className="relative h-[847px] w-[1456px] shrink-0 bg-white">
      <BarChart />
      <MapVisual />
      <svg className="absolute left-px top-[819px] h-[2px] w-[1454px]"><line x1="0" x2="1454" y1="1" y2="1" stroke="#808080" strokeWidth="2" strokeDasharray="2 2" /></svg>
    </div>
  );
}

function PageTabs() {
  return (
    <div className="flex h-[35px] shrink-0 items-center bg-[#f3f2f1] text-[12px]">
      <svg viewBox="0 0 24 24" className="ml-[10px] h-6 w-6 translate-y-[3px]" fill="#117865"><rect x="4" y="0" width="16" height="10.500" rx="1" /><rect x="2" y="11.500" width="20" height="1.500" rx=".7" /><rect x="0" y="19" width="24" height="2.800" rx="1" /></svg>
      <svg viewBox="0 0 12 20" className="ml-[26px] h-5 w-3 -translate-y-[2px]" fill="none" stroke="#555" strokeWidth="1.300"><rect x=".8" y=".8" width="10.400" height="18.400" rx="1.500" /><path d="M4 16.500h4" /></svg>
      <svg viewBox="0 0 28 10" className="ml-[21px] h-[10px] w-[28px]" fill="none" stroke="#c8c8c8"><path d="M5 1v8L1 5zM23 1v8l4-4z" /></svg>
      <div className="ml-[6px] flex h-full w-[75px] items-center border-b-4 border-l border-b-[#117865] border-l-[#999] bg-white pl-[20px] pt-[5px]"><T w={34} className="font-medium">Page 1</T></div>
      <div className="flex h-full w-10 items-center justify-center bg-[#117865] pt-[2px]"><Plus className="h-[15px] w-[15px] text-white" strokeWidth={4.500} /></div>
    </div>
  );
}

function SearchBox({ className }) {
  return (
    <div className={`flex shrink-0 items-center rounded-[2px] border border-[#8a8886] bg-white ${className}`}>
      <svg viewBox="0 0 15 15" className="ml-[7px] h-[15px] w-[15px]" fill="none" stroke="#333" strokeWidth="1.200"><circle cx="9.500" cy="5.500" r="4.700" /><path d="M6 9L1 14" /></svg>
      <T w={41} className="ml-[6px] text-[13px] text-[#a19f9d]">Search</T>
    </div>
  );
}

function Field({ label, lw, value, vw, select }) {
  return (
    <div className="h-[52px] shrink-0">
      <div className="flex h-[22px] items-center"><T w={lw}>{label}</T></div>
      <div className={`flex h-[24px] items-center justify-between rounded-[2px] border border-[#8a8886] bg-white pr-2 ${select ? 'pl-[8px]' : 'pl-[6px]'}`}>
        <T w={vw}>{value}</T>{select && <ChevronDown className="h-[11px] w-[11px]" strokeWidth={2} />}
      </div>
    </div>
  );
}

function Visualizations() {
  return (
    <div className="flex w-[181px] shrink-0 flex-col border-l border-[#e1dfdd] bg-[#f3f2f1] text-[12px] text-[#252423]">
      <div className="flex h-[38px] shrink-0 items-center justify-between pl-2 pr-[8px]">
        <T w={99} className="text-[15px] font-semibold">Visualizations</T><ChevronsRight className="h-3 w-3" strokeWidth={3} />
      </div>
      <div className="flex h-[15px] shrink-0 items-center pl-2"><T w={73} className="font-semibold">Format visual</T></div>
      <svg viewBox="0 0 180 50" className="h-[50px] w-[180px] shrink-0" fill="none" stroke="#333" strokeWidth="1.200">
        <path d="M12 8.500h19" strokeWidth="1.500" /><path d="M12.500 12.500h23v8h-23zM12.500 24.500h23v8h-23z" strokeDasharray="2 1.500" strokeWidth="1.500" />
        <rect x="74" y="4" width="32" height="32" rx="1" fill="#d2d0ce" stroke="none" />
        <path d="M80.500 28V17h6M96 14.500h4v4M80 28h4" stroke="#555" strokeWidth="1.500" />
        <rect x="87" y="9.500" width="7" height="17" fill="#117865" /><path d="M102 17l-9 10-2.500-2 9-8z" fill="#f3f2f1" stroke="#444" /><path d="M91 24c-4 0-3 6-7 7.500 5 1.500 9 0 9-4.500z" fill="#117865" stroke="#333" strokeWidth=".8" />
        <circle cx="154" cy="18" r="10" strokeWidth="1.400" /><path d="M161.500 25.500l6 6" strokeWidth="3" /><path d="M144 19l5-4 4 3 9-6" strokeWidth="1.400" /><path d="M149 26v-5M153 27v-6M157 26v-7M160 24v-7" strokeWidth="1.500" />
        <path d="M0 48.500h82l8-6.500 8 6.500h82" stroke="#8a8886" fill="#f3f2f1" />
      </svg>
      <SearchBox className="ml-2 mt-[7px] h-[27px] w-[164px]" />
      <div className="mt-[15px] flex h-[26px] shrink-0 items-start pl-3 text-[13px]">
        <div className="border-b-2 border-[#117865] pb-[4px]"><T w={38} className="font-bold">Visual</T></div>
        <T w={48} className="ml-4">General</T>
        <svg viewBox="0 0 12 4" className="ml-[36px] mt-[10px] h-1 w-3" fill="#333"><circle cx="2" cy="2" r="1" /><circle cx="6" cy="2" r="1" /><circle cx="10" cy="2" r="1" /></svg>
      </div>
      <div className="mt-[17px] flex h-[36px] shrink-0 items-center pl-[9px]"><ChevronDown className="h-[11px] w-[11px]" strokeWidth={2.500} /><T w={115} className="ml-[4px] font-semibold">Ellipsis Drive Settings</T></div>
      <div className="h-[345px] shrink-0 bg-[#e1dfdd] px-2 pt-[9px]">
        <div className="h-[295px] w-[164px] rounded bg-[#f3f2f1] px-2 pt-[6px] shadow-[0_1px_4px_rgba(0,0,0,.3)]">
          <div className="flex h-[22px] items-center justify-between">
            <T w={65}>Enable Filter</T>
            <div className="flex h-[16px] w-8 items-center justify-between rounded-full bg-[#117865] pl-[5px] pr-[4px] text-[9px] text-white">On<div className="h-2 w-2 rounded-full bg-white" /></div>
          </div>
          <div className="mt-[6px] flex flex-col">
            <Field label="Ellipsis Drive url" lw={83} value="c7fb&hideSidePane=true" vw={134} />
            <Field label="Condition" lw={52} value="Is" vw={8} select />
            <Field label="Property Name" lw={80} value="iso_a2" vw={32} />
            <Field label="Table Name" lw={62} value="Table" vw={27} />
            <Field label="Column Name" lw={76} value="Name" vw={31} />
          </div>
        </div>
        <div className="mt-[11px] flex h-5 items-center pl-1"><Undo2 className="h-[9px] w-[9px] text-[#117865]" strokeWidth={2.300} /><T w={83} className="ml-[7px]">Reset to default</T></div>
      </div>
    </div>
  );
}

function DataPane() {
  return (
    <div className="flex w-[178px] shrink-0 flex-col border-l border-[#e1dfdd] bg-[#f3f2f1] text-[12px] text-[#252423]">
      <div className="flex h-[38px] shrink-0 items-center justify-between pl-2 pr-[5px]"><T w={34} className="text-[15px] font-semibold">Data</T><ChevronsRight className="h-3 w-3" strokeWidth={3} /></div>
      <SearchBox className="ml-1 mt-[7px] h-[27px] w-[172px]" />
      <div className="mt-[10px] flex h-[22px] items-center pl-2"><Chev /><TableIcon className="ml-[4px] h-[14px] w-[13px]" strokeWidth={2} /><T w={27} className="ml-[5px]">Table</T></div>
      <div className="flex h-[25px] items-center pl-[38px]"><div className="h-3 w-3 rounded-[2px] border border-[#8a8886]" /><T w={32} className="ml-[26px]">Name</T></div>
      <div className="flex h-[24px] items-center pl-[38px]"><div className="h-3 w-3 rounded-[2px] border border-[#8a8886]" /><Sigma className="ml-[8px] h-[13px] w-[13px]" strokeWidth={1.700} /><T w={59} className="ml-[5px]">SomeValue</T></div>
    </div>
  );
}

export default function App() {
  return (
    <div className="h-[1080px] w-[1921px] overflow-hidden bg-[#6a6450] p-px font-['Open_Sans','Noto_Sans',sans-serif]">
      <div className="h-full w-full border-2 border-[#fbe033] bg-[#33323a] p-px">
        <div className="flex h-[1072px] w-[1913px] flex-col overflow-hidden">
          <TabStrip />
          <UrlBar />
          <Header />
          <div className="flex min-h-0 flex-1">
            <Sidebar />
            <div className="flex w-[1848px] shrink-0 flex-col shadow-[-1px_0_4px_rgba(0,0,0,.2)]">
              <CommandBar />
              <div className="flex h-[882px] shrink-0">
                <div className="flex w-[1489px] shrink-0 flex-col">
                  <div className="flex h-[847px] bg-white">
                    <Canvas />
                    <div className="flex w-[33px] flex-col items-center border-l border-[#b3b0ad] text-[#252423]">
                      <ChevronsLeft className="mt-[13px] h-3 w-3" strokeWidth={3} />
                      <svg viewBox="0 0 10 10" className="ml-1 mt-[18px] h-[9px] w-[9px] shrink-0" fill="#252423"><path d="M0 4h1.500v2H0zM3 3h2v4H3zM6 2h1.500v6H6zM8.500 0H10v10H8.500z" /></svg>
                      <div className="mt-[11px] text-[15px] font-semibold leading-none [writing-mode:vertical-rl]">Filters</div>
                    </div>
                  </div>
                  <PageTabs />
                </div>
                <Visualizations />
                <DataPane />
              </div>
              <div className="flex h-[21px] items-center border-t border-[#e1dfdd] bg-[#f4f4f4] pt-[3px] text-[12.500px] text-[#444]">
                <T w={59} className="ml-[5px]">Page 1 of 1</T>
                <svg viewBox="0 0 124 12" className="ml-auto h-3 w-[124px] translate-y-[4px]" stroke="#605e5c" fill="none" strokeWidth="1.200"><path d="M0 5.500h4.500" strokeWidth="2" /><path d="M8 6.500h100M114 5.500h8M118 1.500v8" /><rect x="59" y="1" width="4" height="10" fill="#605e5c" stroke="none" /></svg>
                <T w={29} className="ml-[15px] translate-y-[4px]">114%</T>
                <svg viewBox="0 0 14 12" className="ml-[11px] mr-[17px] h-3 w-[14px] translate-y-[5px]" fill="none" stroke="#605e5c" strokeWidth="1.200"><rect x=".6" y=".6" width="12.800" height="10" rx="2" /><path d="M5 3H3v4M9 3h2v4" /></svg>
              </div>
            </div>
          </div>
        </div>
      </div>
    </div>
  );
}
